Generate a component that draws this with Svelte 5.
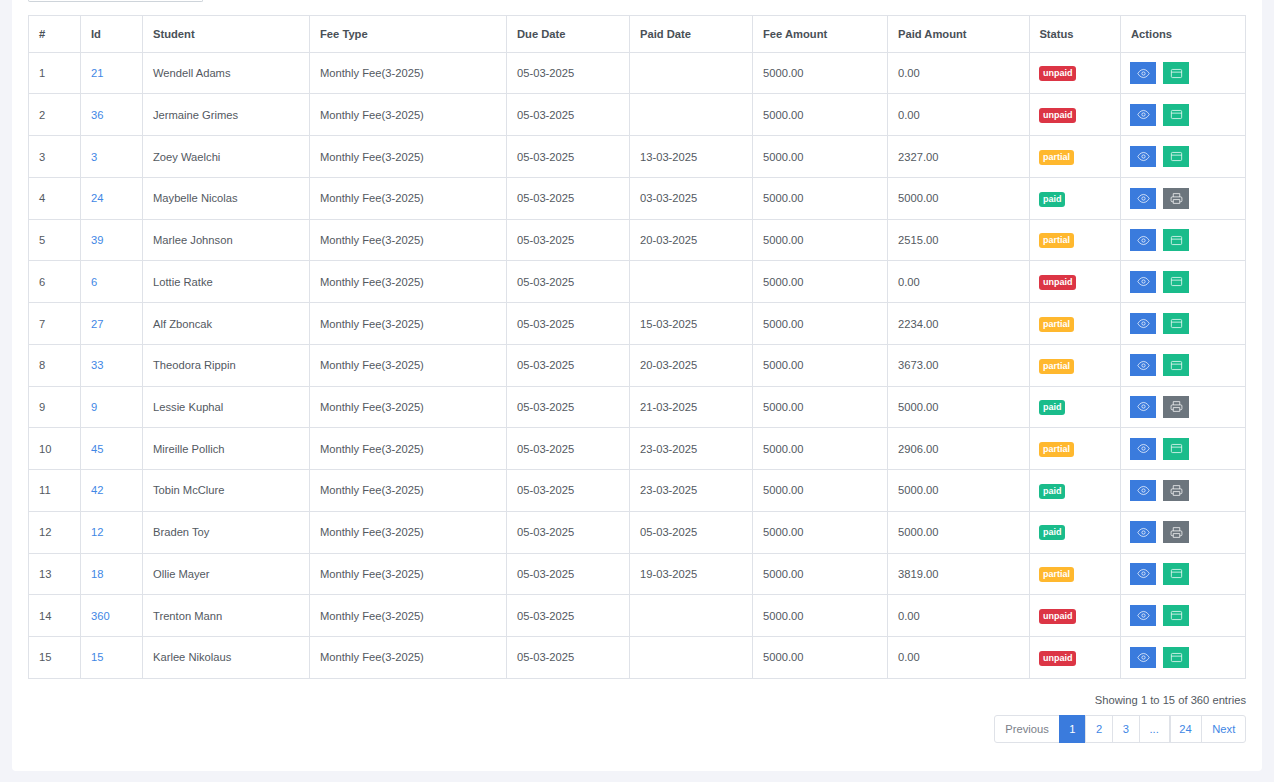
<script>
  const rows = [
    [21, 'Wendell Adams', '', '0.00', 'unpaid'],
    [36, 'Jermaine Grimes', '', '0.00', 'unpaid'],
    [3, 'Zoey Waelchi', '13-03-2025', '2327.00', 'partial'],
    [24, 'Maybelle Nicolas', '03-03-2025', '5000.00', 'paid'],
    [39, 'Marlee Johnson', '20-03-2025', '2515.00', 'partial'],
    [6, 'Lottie Ratke', '', '0.00', 'unpaid'],
    [27, 'Alf Zboncak', '15-03-2025', '2234.00', 'partial'],
    [33, 'Theodora Rippin', '20-03-2025', '3673.00', 'partial'],
    [9, 'Lessie Kuphal', '21-03-2025', '5000.00', 'paid'],
    [45, 'Mireille Pollich', '23-03-2025', '2906.00', 'partial'],
    [42, 'Tobin McClure', '23-03-2025', '5000.00', 'paid'],
    [12, 'Braden Toy', '05-03-2025', '5000.00', 'paid'],
    [18, 'Ollie Mayer', '19-03-2025', '3819.00', 'partial'],
    [360, 'Trenton Mann', '', '0.00', 'unpaid'],
    [15, 'Karlee Nikolaus', '', '0.00', 'unpaid']
  ]
  const heads = ['#', 'Id', 'Student', 'Fee Type', 'Due Date', 'Paid Date', 'Fee Amount', 'Paid Amount', 'Status', 'Actions']
  const widths = [52, 62, 167, 197, 123, 123, 135, 142, 91, 125]
  const pages = ['2', '3', '...']
</script>

<div class="page">
  <div class="card">
    <div class="filter"></div>

    <table>
      <colgroup>
        {#each widths as w}
          <col style="width: {w}px" />
        {/each}
      </colgroup>
      <thead>
        <tr>
          {#each heads as h}
            <th>{h}</th>
          {/each}
        </tr>
      </thead>
      <tbody>
        {#each rows as [id, name, paidDate, paid, status], i}
          <tr>
            <td>{i + 1}</td>
            <td><a href="#/" class="link">{id}</a></td>
            <td>{name}</td>
            <td>Monthly Fee(3-2025)</td>
            <td>05-03-2025</td>
            <td>{paidDate}</td>
            <td>5000.00</td>
            <td>{paid}</td>
            <td class="tight"><span class="badge {status}">{status}</span></td>
            <td class="tight">
              <div class="actions">
                <button class="btn view" aria-label="View">
                  <svg viewBox="0 0 24 24"><path d="M1.500 12S5.500 4.500 12 4.500 22.500 12 22.500 12 18.500 19.500 12 19.500 1.500 12 1.500 12z" /><circle cx="12" cy="12" r="3" /></svg>
                </button>
                {#if status === 'paid'}
                  <button class="btn print" aria-label="Print">
                    <svg viewBox="0 0 24 24"><path d="M6 9V3h12v6" /><path d="M6 18H4a2 2 0 0 1-2-2v-5a2 2 0 0 1 2-2h16a2 2 0 0 1 2 2v5a2 2 0 0 1-2 2h-2" /><rect x="6" y="14" width="12" height="7" /></svg>
                  </button>
                {:else}
                  <button class="btn pay" aria-label="Pay">
                    <svg viewBox="0 0 24 24"><rect x="2.500" y="4.500" width="19" height="15" rx="2" /><path d="M2.500 9.500h19" /></svg>
                  </button>
                {/if}
              </div>
            </td>
          </tr>
        {/each}
      </tbody>
    </table>

    <div class="info">Showing 1 to 15 of 360 entries</div>
    <div class="pager-row">
      <nav class="pager">
        <span class="pg prev">Previous</span>
        <span class="pg active">1</span>
        {#each pages as p}
          <a href="#/" class="pg">{p}</a>
        {/each}
        <a href="#/" class="pg gap">24</a>
        <a href="#/" class="pg">Next</a>
      </nav>
    </div>
  </div>
</div>

<style>
  :global(body) {
    margin: 0;
    background: #f3f4f9;
    font-family: "Liberation Sans", Arial, sans-serif;
    color: #53595f;
  }

  .page {
    padding: 0 12px 11px;
  }

  .card {
    background: #fff;
    padding: 0 16px 26px;
    border-radius: 0 0 4px 4px;
    height: 771px;
    box-sizing: border-box;
  }

  .filter {
    width: 175px;
    height: 2px;
    box-sizing: border-box;
    border: 1px solid #ced4da;
    border-top: 0;
    border-radius: 0 0 4px 4px;
    margin-bottom: 13px;
  }

  table {
    width: 1217px;
    table-layout: fixed;
    border-collapse: collapse;
    font-size: 11.2px;
  }

  th, td {
    border: 1px solid #dfe2e8;
    padding: 0 10px;
    text-align: left;
    vertical-align: middle;
  }

  td.tight,
  th:nth-child(9) {
    padding: 0 9.4px;
  }

  thead tr {
    height: 36.75px;
  }

  tbody tr {
    height: 41.74px;
  }

  th {
    font-weight: 700;
    color: #495057;
  }

  .link {
    color: #3f87e5;
    text-decoration: none;
  }

  .badge {
    display: inline-block;
    padding: 3px 3.6px;
    border-radius: 3px;
    color: #fff;
    font-size: 9px;
    font-weight: 700;
    line-height: 9px;
    vertical-align: -1.500px;
  }

  .unpaid { background: #dc3545; }
  .partial { background: #ffb82e; }
  .paid { background: #1abc8b; }

  .actions {
    display: flex;
    gap: 7px;
  }

  .btn {
    width: 26px;
    height: 21.6px;
    border: 0;
    padding: 0;
    display: flex;
    align-items: center;
    justify-content: center;
  }

  .btn svg {
    width: 13px;
    height: 13px;
    fill: none;
    stroke: rgba(255, 255, 255, 0.75);
    stroke-width: 1.8;
    stroke-linejoin: round;
  }

  .view { background: #3a7bdd; }
  .pay { background: #1abc8b; }
  .print { background: #6c757d; }

  .info {
    margin-top: 15px;
    text-align: right;
    font-size: 11.2px;
    line-height: 13px;
  }

  .pager-row {
    display: flex;
    justify-content: flex-end;
    margin-top: 8px;
  }

  .pager {
    display: flex;
    border: 1px solid #dfe2e8;
    border-radius: 3px;
    height: 26px;
    font-size: 11.2px;
  }

  .pg {
    padding: 0 9.75px;
    display: flex;
    align-items: center;
    color: #3f87e5;
    text-decoration: none;
    border-left: 1px solid #dfe2e8;
  }

  .prev {
    color: #7b8189;
    border-left: 0;
  }

  .active {
    background: #3a7bdd;
    color: #fff;
    border-left: 1px solid #3a7bdd;
    margin: -1px 0;
  }

  .gap {
    border-left-width: 2px;
    padding-left: 8.75px;
  }
</style>
